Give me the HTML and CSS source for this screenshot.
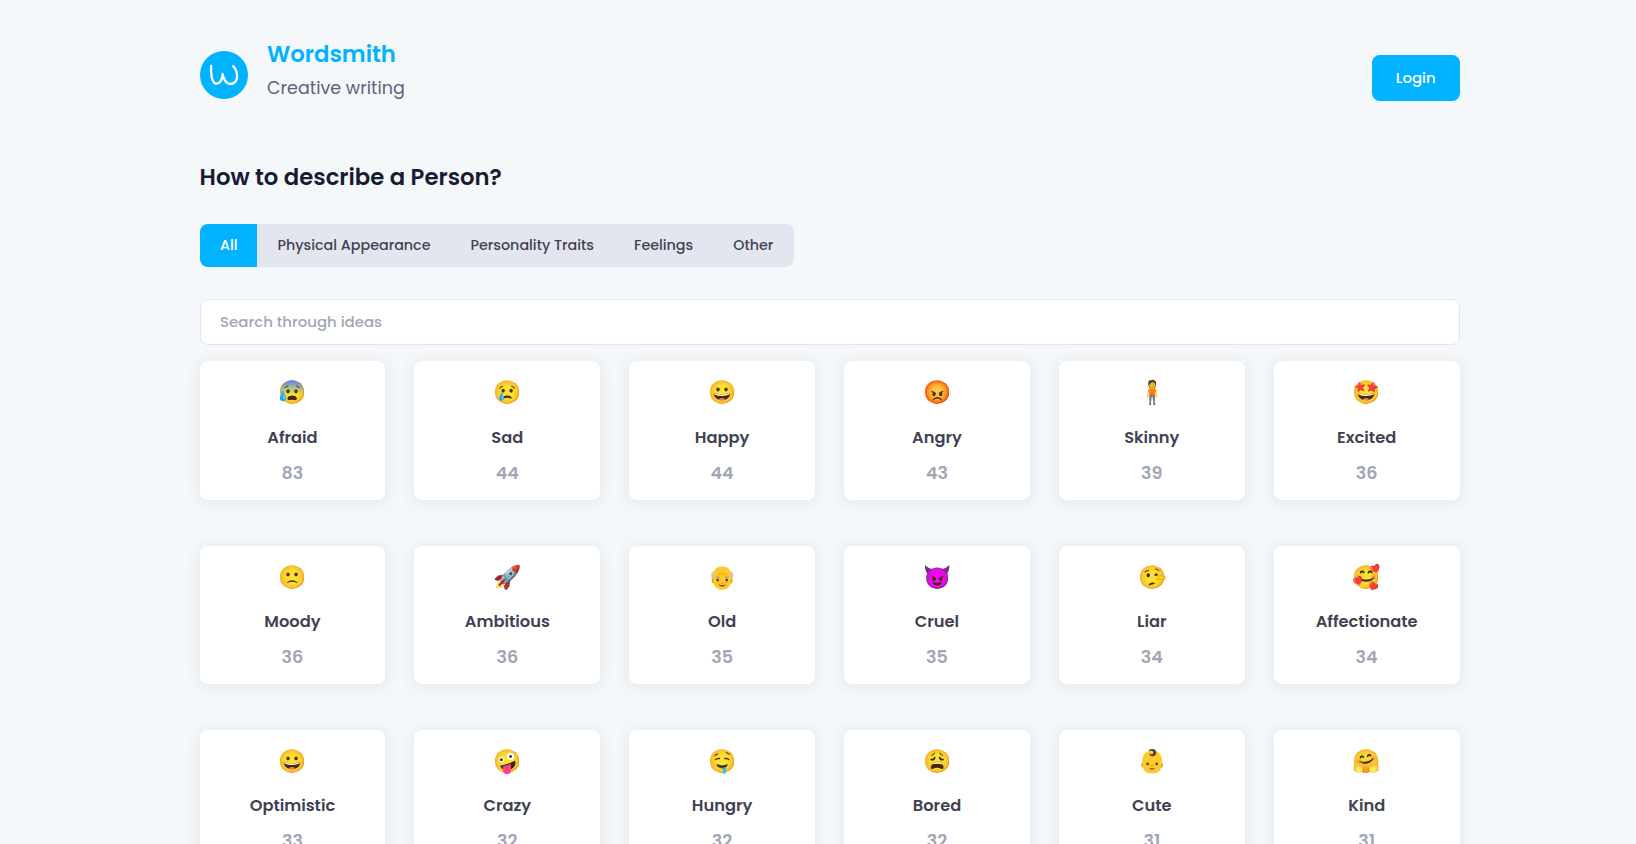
FILE: index.html
```html
<!DOCTYPE html>
<html lang="en">
<head>
<meta charset="utf-8">
<title>Wordsmith</title>
<link rel="stylesheet" href="styles.css">
</head>
<body>
<div class="page">
  <header class="header">
    <a class="brand">
      <svg class="logo" viewBox="0 0 48 48" width="48" height="48"><circle cx="24" cy="24" r="24" fill="#00b2ff"/><path d="M11.2 14.8C10.6 20 11.4 32.8 16.4 32.7C20 32.5 22.7 28.4 22.6 22.8C23.2 27.6 26 32.9 30.3 32.9C35.6 32.7 37.6 28.3 37 24.1C36.6 20 35.4 17.2 33.1 15.2" fill="none" stroke="#fff" stroke-width="2.3" stroke-linecap="round" stroke-linejoin="round"/></svg>
      <span class="brand-text"><span class="brand-name">Wordsmith</span><span class="brand-tag">Creative writing</span></span>
    </a>
    <button class="login">Login</button>
  </header>
  <h1 class="title">How to describe a Person?</h1>
  <nav class="tabs"><a class="tab active">All</a><a class="tab tab-next">Physical Appearance</a><a class="tab">Personality Traits</a><a class="tab">Feelings</a><a class="tab">Other</a></nav>
  <input class="search" type="text" placeholder="Search through ideas">
  <main class="grid">
    <article class="card"><span class="emoji">😰</span><span class="name">Afraid</span><span class="count">83</span></article>
    <article class="card"><span class="emoji">😢</span><span class="name">Sad</span><span class="count">44</span></article>
    <article class="card"><span class="emoji">😀</span><span class="name">Happy</span><span class="count">44</span></article>
    <article class="card"><span class="emoji">😡</span><span class="name">Angry</span><span class="count">43</span></article>
    <article class="card"><span class="emoji">🧍</span><span class="name">Skinny</span><span class="count">39</span></article>
    <article class="card"><span class="emoji">🤩</span><span class="name">Excited</span><span class="count">36</span></article>
    <article class="card"><span class="emoji">🙁</span><span class="name">Moody</span><span class="count">36</span></article>
    <article class="card"><span class="emoji">🚀</span><span class="name">Ambitious</span><span class="count">36</span></article>
    <article class="card"><span class="emoji">👴</span><span class="name">Old</span><span class="count">35</span></article>
    <article class="card"><span class="emoji">😈</span><span class="name">Cruel</span><span class="count">35</span></article>
    <article class="card"><span class="emoji">🤥</span><span class="name">Liar</span><span class="count">34</span></article>
    <article class="card"><span class="emoji">🥰</span><span class="name">Affectionate</span><span class="count">34</span></article>
    <article class="card"><span class="emoji">😀</span><span class="name">Optimistic</span><span class="count">33</span></article>
    <article class="card"><span class="emoji">🤪</span><span class="name">Crazy</span><span class="count">32</span></article>
    <article class="card"><span class="emoji">🤤</span><span class="name">Hungry</span><span class="count">32</span></article>
    <article class="card"><span class="emoji">😩</span><span class="name">Bored</span><span class="count">32</span></article>
    <article class="card"><span class="emoji">👶</span><span class="name">Cute</span><span class="count">31</span></article>
    <article class="card"><span class="emoji">🤗</span><span class="name">Kind</span><span class="count">31</span></article>
  </main>
</div>
</body>
</html>
```
FILE: styles.css
```css
* { box-sizing: border-box; }
html { font-size: 13px; }
html, body { height: 100%; overflow: hidden; }
body {
  margin: 0;
  background: #f5f8fb;
  color: #3f4254;
  font-family: Poppins, Inter, "Noto Sans", "Noto Color Emoji", sans-serif;
}
.page { width: 1260.2px; margin-left: 199.6px; padding-top: 39px; }
.header { display: flex; justify-content: space-between; height: 122px; }
.brand { display: flex; gap: 19.4px; }
.logo { margin-top: 12px; display: block; }
.brand-text { display: flex; flex-direction: column; white-space: nowrap; }
.brand-name { color: #00b2ff; font-size: 1.75rem; font-weight: 600; line-height: 30px; }
.brand-tag { color: #5e6278; font-size: 1.35rem; line-height: 28px; margin-top: 5px; }
.login {
  width: 88px; height: 46px; margin-top: 16px; padding: 0;
  border: 0; border-radius: 8px; background: #00b2ff; color: #fff;
  font: 500 1.15rem/46px Poppins, Inter, sans-serif;
}
.title { margin: 0; color: #181c32; font-size: 1.75rem; font-weight: 600; line-height: 32px; white-space: nowrap; }
.tabs { display: flex; width: 594px; height: 43px; margin-top: 31px; margin-left: 0.4px; border-radius: 8px; overflow: hidden; background: #e4e6ef; }
.tab { flex: none; padding: 0 20.03px; font-size: 1.1rem; font-weight: 500; line-height: 42px; white-space: nowrap; }
.active { padding-right: 19.4px; background: #00b2ff; color: #fff; }
.tab-next { padding-left: 20.6px; }
.search {
  display: block; width: 100%; height: 46px; margin-top: 32px; padding: 0 19.5px;
  border: 1px solid #e4e6ef; border-radius: 8px; background: #fff;
  font: 500 1.15rem Poppins, Inter, sans-serif;
}
.search::placeholder { color: #a1a5b7; opacity: 1; }
.grid { display: grid; grid-template-columns: repeat(6, 185.7px); column-gap: 29.17px; row-gap: 45.75px; margin-top: 16.4px; }
.card {
  display: flex; flex-direction: column; align-items: center; height: 138.5px; padding-top: 14px;
  background: #fff; border-radius: 8px; box-shadow: 0 0.1rem 1rem 0.25rem rgba(0, 0, 0, 0.05);
}
.emoji { font-size: 1.75rem; line-height: 34.1px; height: 34.1px; padding-left: 0.6px; }
.name { margin-top: 16.35px; font-size: 1.25rem; font-weight: 600; line-height: 24.4px; }
.count { margin-top: 9.45px; color: #a1a5b7; font-size: 1.35rem; font-weight: 600; line-height: 26.3px; }
```
